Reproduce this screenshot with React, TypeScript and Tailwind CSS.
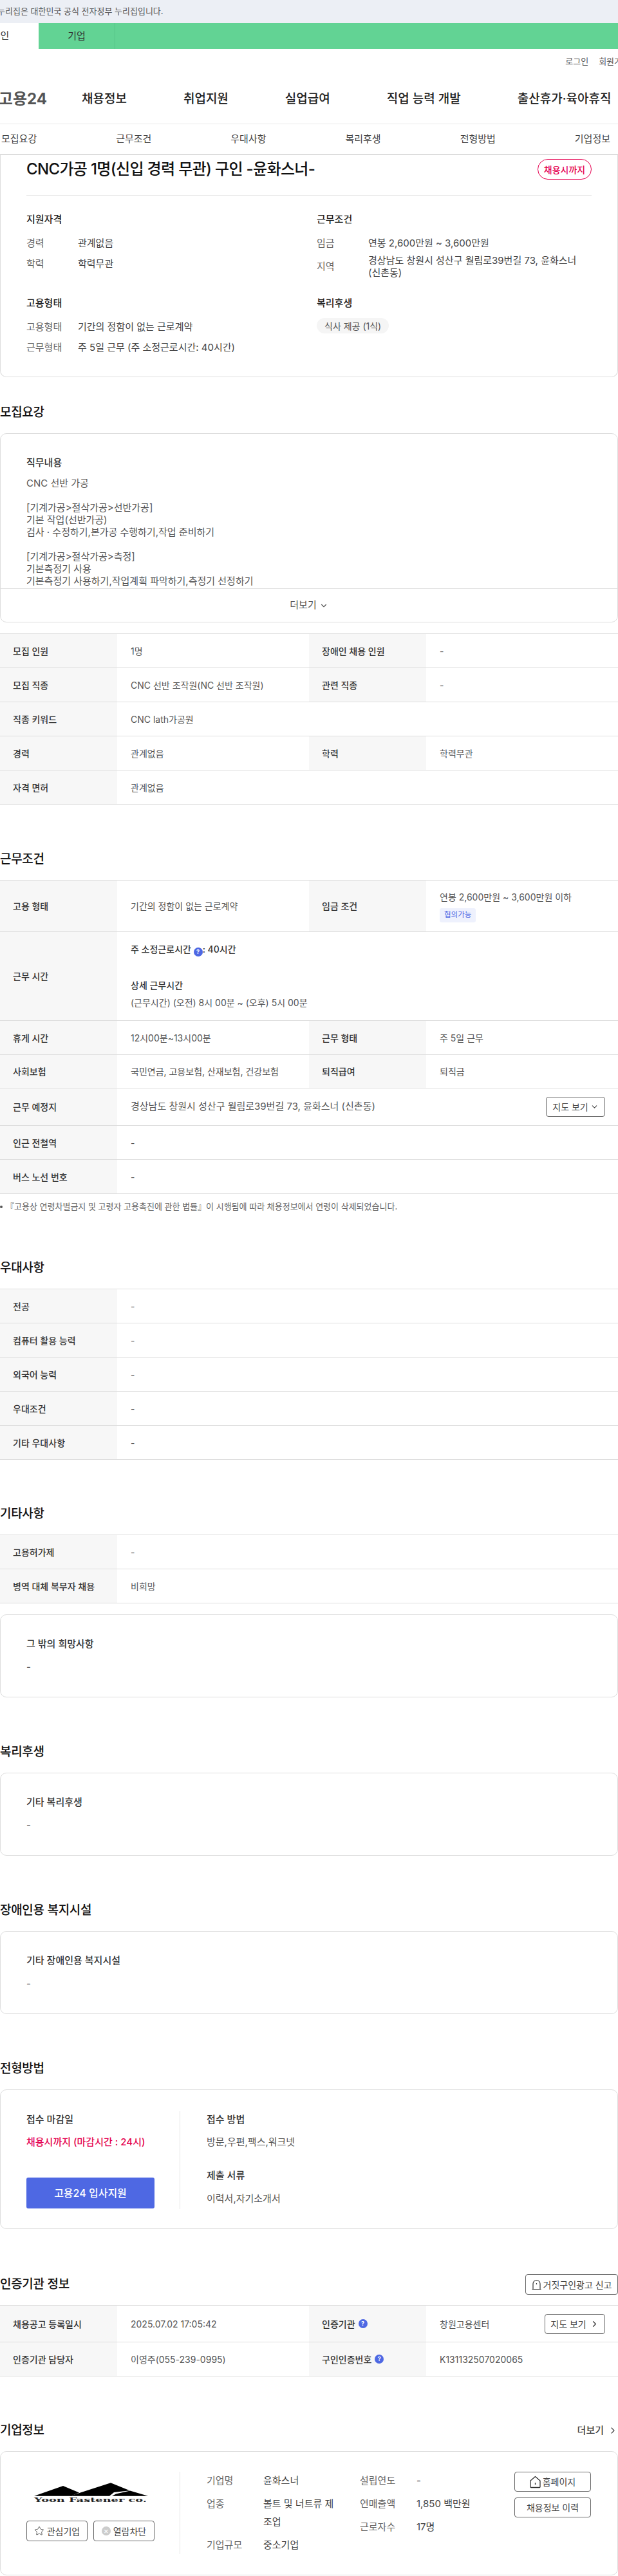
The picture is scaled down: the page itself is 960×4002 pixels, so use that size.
import { ChevronDown, ChevronRight, Star } from "lucide-react";
import type { ReactNode } from "react";

const th = "w-[182px] shrink-0 self-stretch flex items-center bg-[#f7f7f7] pl-[20px] font-medium text-[#333]";
const td = "w-[298px] shrink-0 pl-[21px] text-[#555]";
const btn = "flex items-center justify-center rounded-[4px] border border-[#666] bg-white text-[14px] text-[#444]";

function Help() {
  return <span className="inline-flex w-[14px] h-[14px] rounded-full bg-[#4e68e3] text-white text-[9px] font-bold items-center justify-center align-[-2px]">?</span>;
}

function Row({ h, label, value, label2, value2 }: { h: number; label: ReactNode; value: ReactNode; label2?: ReactNode; value2?: ReactNode }) {
  return (
    <div className="flex items-center border-b border-[#ddd] text-[14px]" style={{ height: h }}>
      <div className={th}>{label}</div>
      <div className={label2 ? td : "flex-1 pl-[21px] pr-[20px] text-[#555]"}>{value}</div>
      {label2 && <div className={th}>{label2}</div>}
      {label2 && <div className="flex-1 pl-[21px] pr-[20px] text-[#555]">{value2}</div>}
    </div>
  );
}

function Heading({ children, right }: { children: ReactNode; right?: ReactNode }) {
  return (
    <div className="flex items-center justify-between h-[32px] mb-[16px]">
      <h2 className="text-[19px] font-medium text-[#111] tracking-[-0.3px]">{children}</h2>
      {right}
    </div>
  );
}

function Note({ title }: { title: string }) {
  return (
    <div className="h-[129px] rounded-[10px] border border-[#ddd] px-[40px] pt-[34px]">
      <div className="h-[22px] leading-[22px] text-[15px] font-medium text-[#333]">{title}</div>
      <div className="mt-[14px] h-[22px] leading-[22px] text-[15px] text-[#555]">-</div>
    </div>
  );
}

function KV({ k, v }: { k: string; v: ReactNode }) {
  return (
    <div className="flex h-[32px] items-center">
      <div className="w-[80px] shrink-0 text-[#666]">{k}</div>
      <div className="text-[#444]">{v}</div>
    </div>
  );
}

function Info({ k, v }: { k: string; v: string }) {
  return (
    <div className="flex leading-[28px]">
      <div className="w-[88px] shrink-0 text-[#666]">{k}</div>
      <div className="text-[#444] w-[118px]">{v}</div>
    </div>
  );
}

function Logo() {
  return (
    <svg width="180" height="34" viewBox="0 0 180 34">
      <path d="M46 7L1 22.7H58L71 17.5Z" fill="#000" />
      <path d="M120 2.3L56.5 22.7H118L125 17L149.5 14.3Z" fill="#000" />
      <path d="M150 14.5L178 22.7H122L128 19.5Z" fill="#000" />
      <text x="1" y="31.5" fontFamily="'DejaVu Serif', serif" fontWeight="700" fontSize="10" textLength="175" lengthAdjust="spacingAndGlyphs" fill="#222">Yoon Fastener co.</text>
    </svg>
  );
}

function HouseIcon() {
  return (
    <svg width="17" height="20" viewBox="0 0 17 20" fill="none" stroke="#333" strokeWidth="1.3">
      <path d="M1 8L8.5 1.5L16 8V17.5A1 1 0 0 1 15 18.5H2A1 1 0 0 1 1 17.5Z" strokeLinejoin="round" />
      <path d="M8.5 11V14" />
    </svg>
  );
}

function ReportIcon() {
  return (
    <svg width="15" height="17" viewBox="0 0 15 17" fill="none" stroke="#333" strokeWidth="1.2">
      <path d="M0.5 15.5H14.5M2 15.5V7A5.5 5.5 0 0 1 13 7V15.5" />
      <path d="M7.5 6V8" />
    </svg>
  );
}

export default function App() {
  return (
    <div className="w-[960px] h-[4002px] overflow-hidden bg-white font-['Inter','Noto_Sans_CJK_KR',sans-serif] text-[15px]">
      {/* gov banner */}
      <div className="h-[36px] bg-[#eceff5] flex items-center text-[13px] text-[#555] whitespace-nowrap -ml-[4px]">
        누리집은 대한민국 공식 전자정부 누리집입니다.
      </div>
      <div className="h-[40px] bg-[#62d394] flex text-[15px] text-[#333]">
        <div className="-ml-[59px] w-[119px] bg-white flex items-center justify-center">개인</div>
        <div className="w-[119px] flex items-center justify-center border-r border-[#55c286]">기업</div>
      </div>

      {/* header */}
      <div className="h-[40px] flex items-center justify-end gap-[16px] -mr-[18px] text-[13px] text-[#555] whitespace-nowrap">
        <span>로그인</span>
        <span>회원가입</span>
      </div>
      <div className="h-[77px] flex items-center border-b border-[#e8e8e8] whitespace-nowrap">
        <div className="w-[127px] shrink-0 flex justify-end pr-[54px] text-[24px] font-bold text-[#555]">고용24</div>
        <div className="flex gap-[88px] text-[19px] font-medium text-[#222]">
          <span>채용정보</span>
          <span>취업지원</span>
          <span>실업급여</span>
          <span>직업 능력 개발</span>
          <span>출산휴가·육아휴직</span>
        </div>
      </div>
      <div className="h-[48px] flex items-center justify-between pl-[2px] pr-[12px] border-b-2 border-[#ddd] text-[15px] text-[#444]">
        <span>모집요강</span>
        <span>근무조건</span>
        <span>우대사항</span>
        <span>복리후생</span>
        <span>전형방법</span>
        <span>기업정보</span>
      </div>

      {/* summary */}
      <div className="h-[345px] rounded-b-[10px] border-x border-b border-[#ddd] px-[40px] pt-[6px]">
        <div className="flex items-center justify-between h-[32px] mb-[24px]">
          <h1 className="text-[24px] font-medium text-[#111] tracking-[-0.65px]">CNC가공 1명(신입 경력 무관) 구인 -윤화스너-</h1>
          <span className="w-[84px] h-[32px] flex items-center justify-center rounded-full border border-[#e5004f] text-[14px] font-medium text-[#e5004f]">채용시까지</span>
        </div>
        <div className="border-t border-[#e8e8e8] pt-[26px] grid grid-cols-[451px_1fr] gap-y-[26px]">
          <div>
            <div className="h-[22px] leading-[22px] font-medium text-[#222] mb-[10px]">지원자격</div>
            <KV k="경력" v="관계없음" />
            <KV k="학력" v="학력무관" />
          </div>
          <div>
            <div className="h-[22px] leading-[22px] font-medium text-[#222] mb-[10px]">근무조건</div>
            <KV k="임금" v="연봉 2,600만원 ~ 3,600만원" />
            <div className="flex items-center h-[40px]">
              <div className="w-[80px] shrink-0 text-[#666]">지역</div>
              <div className="text-[#444] leading-[19px] break-keep">경상남도 창원시 성산구 월림로39번길 73, 윤화스너 (신촌동)</div>
            </div>
          </div>
          <div>
            <div className="h-[22px] leading-[22px] font-medium text-[#222] mb-[10px]">고용형태</div>
            <KV k="고용형태" v="기간의 정함이 없는 근로계약" />
            <KV k="근무형태" v="주 5일 근무 (주 소정근로시간: 40시간)" />
          </div>
          <div>
            <div className="h-[22px] leading-[22px] font-medium text-[#222] mb-[12px]">복리후생</div>
            <span className="inline-flex items-center h-[24px] px-[12px] rounded-full bg-[#f5f5f5] text-[14px] text-[#555]">식사 제공 (1식)</span>
          </div>
        </div>
      </div>

      {/* 모집요강 */}
      <div className="mt-[39px]">
        <Heading>모집요강</Heading>
        <div className="h-[294px] rounded-[10px] border border-[#ddd] overflow-hidden">
          <div className="h-[240px] overflow-hidden px-[40px] pt-[34px]">
            <div className="h-[22px] leading-[22px] font-medium text-[#333] mb-[11px]">직무내용</div>
            <div className="whitespace-pre leading-[19px] text-[#555]">{`CNC 선반 가공

[기계가공>절삭가공>선반가공]
기본 작업(선반가공)
검사 · 수정하기,본가공 수행하기,작업 준비하기

[기계가공>절삭가공>측정]
기본측정기 사용
기본측정기 사용하기,작업계획 파악하기,측정기 선정하기`}</div>
          </div>
          <div className="h-[52px] border-t border-[#ddd] flex items-center justify-center gap-[4px] text-[15px] text-[#555]">
            더보기 <ChevronDown size={14} strokeWidth={2} />
          </div>
        </div>
      </div>

      <div className="mt-[17px] border-t border-[#ddd]">
        <Row h={53} label="모집 인원" value="1명" label2="장애인 채용 인원" value2="-" />
        <Row h={53} label="모집 직종" value="CNC 선반 조작원(NC 선반 조작원)" label2="관련 직종" value2="-" />
        <Row h={53} label="직종 키워드" value="CNC lath가공원" />
        <Row h={53} label="경력" value="관계없음" label2="학력" value2="학력무관" />
        <Row h={53} label="자격 면허" value="관계없음" />
      </div>

      {/* 근무조건 */}
      <div className="mt-[69px]">
        <Heading>근무조건</Heading>
        <div className="border-t border-[#ddd]">
          <Row
            h={80}
            label="고용 형태"
            value="기간의 정함이 없는 근로계약"
            label2="임금 조건"
            value2={
              <div>
                <div className="leading-[22px]">연봉 2,600만원 ~ 3,600만원 이하</div>
                <span className="mt-[6px] inline-flex items-center h-[22px] px-[7px] rounded-[3px] bg-[#eef1fd] text-[11.5px] text-[#4e68e3]">협의가능</span>
              </div>
            }
          />
          <Row
            h={138}
            label="근무 시간"
            value={
              <div className="w-[500px]">
                <div className="font-medium text-[#333] leading-[22px] pb-[34px]">주 소정근로시간 <Help />: 40시간</div>
                <div className="font-medium text-[#333] leading-[22px] mb-[5px]">상세 근무시간</div>
                <div className="leading-[22px]">(근무시간) (오전) 8시 00분 ~ (오후) 5시 00분</div>
              </div>
            }
          />
          <Row h={53} label="휴게 시간" value="12시00분~13시00분" label2="근무 형태" value2="주 5일 근무" />
          <Row h={52} label="사회보험" value="국민연금, 고용보험, 산재보험, 건강보험" label2="퇴직급여" value2="퇴직금" />
          <Row
            h={58}
            label="근무 예정지"
            value={
              <div className="flex items-center justify-between">
                <span className="text-[15px]">경상남도 창원시 성산구 월림로39번길 73, 윤화스너 (신촌동)</span>
                <span className={`${btn} w-[92px] h-[31px] gap-[3px]`}>지도 보기 <ChevronDown size={13} /></span>
              </div>
            }
          />
          <Row h={53} label="인근 전철역" value="-" />
          <Row h={53} label="버스 노선 번호" value="-" />
        </div>
        <div className="mt-[9px] h-[22px] flex items-center text-[13px] text-[#666] whitespace-nowrap">
          <span className="w-[4px] h-[4px] rounded-full bg-[#555] mr-[5px]" />
          『고용상 연령차별금지 및 고령자 고용촉진에 관한 법률』이 시행됨에 따라 채용정보에서 연령이 삭제되었습니다.
        </div>
      </div>

      {/* 우대사항 */}
      <div className="mt-[68px]">
        <Heading>우대사항</Heading>
        <div className="border-t border-[#ddd]">
          <Row h={53} label="전공" value="-" />
          <Row h={53} label="컴퓨터 활용 능력" value="-" />
          <Row h={53} label="외국어 능력" value="-" />
          <Row h={53} label="우대조건" value="-" />
          <Row h={53} label="기타 우대사항" value="-" />
        </div>
      </div>

      {/* 기타사항 */}
      <div className="mt-[68px]">
        <Heading>기타사항</Heading>
        <div className="border-t border-[#ddd]">
          <Row h={53} label="고용허가제" value="-" />
          <Row h={53} label="병역 대체 복무자 채용" value="비희망" />
        </div>
        <div className="mt-[17px]">
          <Note title="그 밖의 희망사항" />
        </div>
      </div>

      <div className="mt-[69px]">
        <Heading>복리후생</Heading>
        <Note title="기타 복리후생" />
      </div>

      <div className="mt-[69px]">
        <Heading>장애인용 복지시설</Heading>
        <Note title="기타 장애인용 복지시설" />
      </div>

      {/* 전형방법 */}
      <div className="mt-[69px]">
        <Heading>전형방법</Heading>
        <div className="h-[217px] rounded-[10px] border border-[#ddd] px-[40px] pt-[33px] flex">
          <div className="w-[239px] shrink-0 h-[152px] border-r border-[#e4e4e4]">
            <div className="leading-[24px] h-[24px] font-medium text-[#333] mt-[1px]">접수 마감일</div>
            <div className="leading-[24px] h-[24px] mt-[11px] font-medium text-[#e5004f]">채용시까지 (마감시간 : 24시)</div>
            <div className="mt-[43px] w-[199px] h-[48px] rounded-[3px] bg-[#4e68e3] flex items-center justify-center text-[16px] font-medium text-white">고용24 입사지원</div>
          </div>
          <div className="pl-[41px]">
            <div className="leading-[24px] h-[24px] font-medium text-[#333] mt-[1px]">접수 방법</div>
            <div className="leading-[24px] h-[24px] mt-[11px] text-[#555]">방문,우편,팩스,워크넷</div>
            <div className="leading-[24px] h-[24px] mt-[28px] font-medium text-[#333]">제출 서류</div>
            <div className="leading-[24px] h-[24px] mt-[12px] text-[#555]">이력서,자기소개서</div>
          </div>
        </div>
      </div>

      {/* 인증기관 정보 */}
      <div className="mt-[70px]">
        <Heading
          right={
            <span className={`${btn} w-[144px] h-[32px] gap-[3px]`}>
              <ReportIcon /> 거짓구인광고 신고
            </span>
          }
        >
          인증기관 정보
        </Heading>
        <div className="border-t border-[#ddd]">
          <Row
            h={57}
            label="채용공고 등록일시"
            value="2025.07.02 17:05:42"
            label2={<span className="flex items-center gap-[5px]">인증기관 <Help /></span>}
            value2={
              <div className="flex items-center justify-between">
                <span>창원고용센터</span>
                <span className={`${btn} w-[94px] h-[31px] gap-[5px]`}>지도 보기 <ChevronRight size={15} strokeWidth={2.2} /></span>
              </div>
            }
          />
          <Row
            h={53}
            label="인증기관 담당자"
            value="이영주(055-239-0995)"
            label2={<span className="flex items-center gap-[5px]">구인인증번호 <Help /></span>}
            value2="K131132507020065"
          />
        </div>
      </div>

      {/* 기업정보 */}
      <div className="mt-[68px]">
        <Heading
          right={
            <span className="flex items-center gap-[6px] text-[15px] font-medium text-[#444]">
              더보기 <ChevronRight size={16} strokeWidth={1.8} />
            </span>
          }
        >
          기업정보
        </Heading>
        <div className="h-[193px] rounded-[10px] border border-[#ddd] px-[40px] pt-[31px] flex">
          <div className="w-[239px] shrink-0 h-[128px] border-r border-[#e4e4e4]">
            <div className="ml-[11px] mt-[15px] h-[34px]"><Logo /></div>
            <div className="mt-[27px] flex gap-[9px]">
              <span className={`${btn} w-[95px] h-[32px] gap-[4px]`}><Star size={16} strokeWidth={1.3} /> 관심기업</span>
              <span className={`${btn} w-[95px] h-[32px] gap-[4px]`}>
                <span className="w-[14px] h-[14px] rounded-full bg-[#ccc] text-white text-[12px] leading-none flex items-center justify-center">×</span> 열람차단
              </span>
            </div>
          </div>
          <div className="pl-[41px] w-[279px] shrink-0 flex flex-col gap-[8px]">
            <Info k="기업명" v="윤화스너" />
            <Info k="업종" v="볼트 및 너트류 제조업" />
            <Info k="기업규모" v="중소기업" />
          </div>
          <div className="w-[240px] shrink-0 flex flex-col gap-[8px]">
            <Info k="설립연도" v="-" />
            <Info k="연매출액" v="1,850 백만원" />
            <Info k="근로자수" v="17명" />
          </div>
          <div className="flex flex-col gap-[9px]">
            <span className={`${btn} w-[119px] h-[31px] gap-[3px]`}><HouseIcon /> 홈페이지</span>
            <span className={`${btn} w-[119px] h-[31px]`}>채용정보 이력</span>
          </div>
        </div>
      </div>
    </div>
  );
}
